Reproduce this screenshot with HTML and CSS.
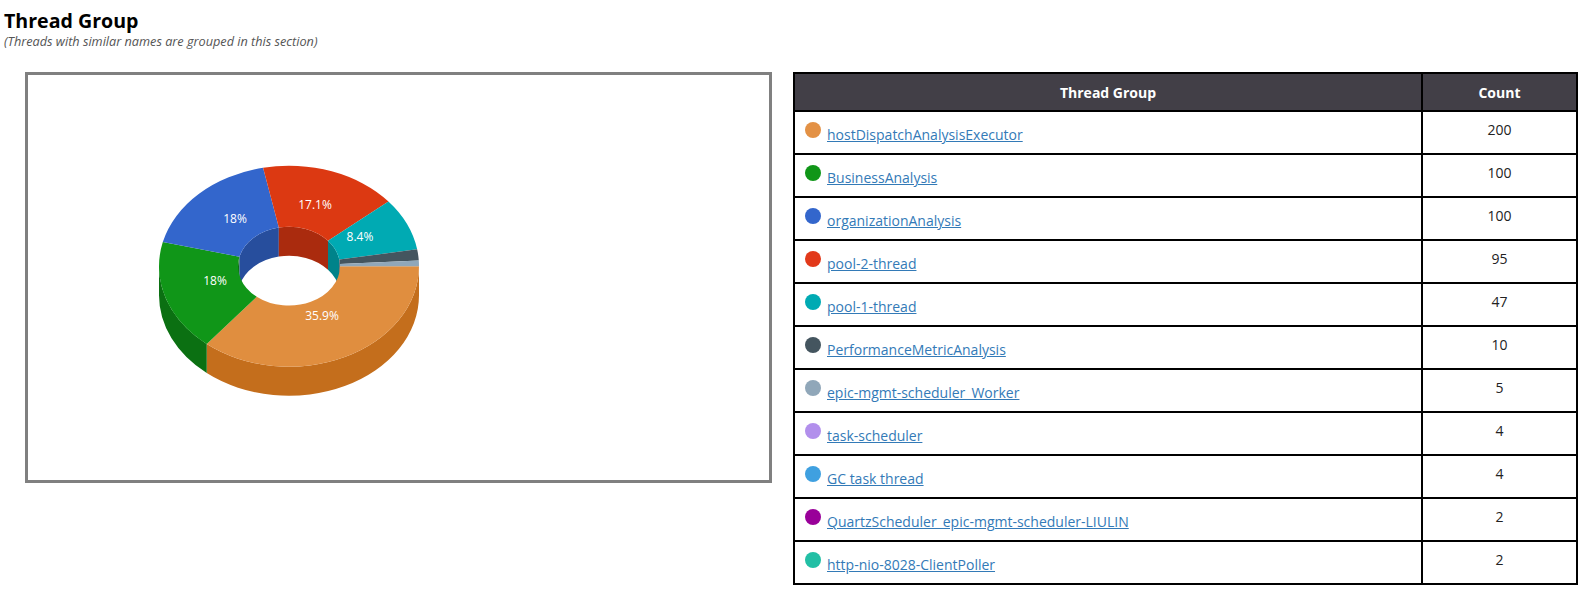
FILE: index.html
```html
<!DOCTYPE html>
<html lang="en">
<head>
<meta charset="utf-8">
<title>Thread Group</title>
<link rel="stylesheet" href="styles.css">
</head>
<body>
<h2 class="title">Thread Group</h2>
<p class="note">(Threads with similar names are grouped in this section)</p>
<div class="content">
  <div class="chart-box">
    <svg class="donut" viewBox="28 75 741 405" width="741" height="405" role="img" aria-label="Thread group pie chart">
      <g transform="translate(0 0.5)">
      <path class="w-orange" d="M419 265.7A130 100.5 0 0 1 206.74 343.52V372.52A130 100.5 0 0 0 419 294.7Z"/>
      <path class="w-green" d="M206.74 343.52A130 100.5 0 0 1 159 265.7V294.7A130 100.5 0 0 0 206.74 372.52Z"/>
      <path class="w-green" d="M238 265.7A51 39.4 0 0 1 239.49 256.24V285.24A51 39.4 0 0 0 238 294.7Z"/>
      <path class="w-blue" d="M239.49 256.24A51 39.4 0 0 1 278.83 227.09V256.09A51 39.4 0 0 0 239.49 285.24Z"/>
      <path class="w-red" d="M278.83 227.09A51 39.4 0 0 1 328.01 240.32V269.32A51 39.4 0 0 0 278.83 256.09Z"/>
      <path class="w-teal" d="M328.01 240.32A51 39.4 0 0 1 339.27 259.06V288.06A51 39.4 0 0 0 328.01 269.32Z"/>
      <path class="w-dark" d="M339.27 259.06A51 39.4 0 0 1 339.92 263.5V292.5A51 39.4 0 0 0 339.27 288.06Z"/>
      <path class="orange" d="M419 265.7A130 100.5 0 0 1 206.74 343.52L256.73 296.21A51 39.4 0 0 0 340 265.7Z"/>
      <path class="green" d="M206.74 343.52A130 100.5 0 0 1 162.81 241.56L239.49 256.24A51 39.4 0 0 0 256.73 296.21Z"/>
      <path class="blue" d="M162.81 241.56A130 100.5 0 0 1 263.08 167.22L278.83 227.09A51 39.4 0 0 0 239.49 256.24Z"/>
      <path class="red" d="M263.08 167.22A130 100.5 0 0 1 388.44 200.97L328.01 240.32A51 39.4 0 0 0 278.83 227.09Z"/>
      <path class="teal" d="M388.44 200.97A130 100.5 0 0 1 417.14 248.77L339.27 259.06A51 39.4 0 0 0 328.01 240.32Z"/>
      <path class="dark" d="M417.14 248.77A130 100.5 0 0 1 418.79 260.09L339.92 263.5A51 39.4 0 0 0 339.27 259.06Z"/>
      <path class="grey" d="M418.79 260.09A130 100.5 0 0 1 419 265.7H340A51 39.4 0 0 0 339.92 263.5Z"/>
      </g>
      <text class="label" x="322" y="320">35.9%</text>
      <text class="label" x="215" y="285">18%</text>
      <text class="label" x="235" y="223">18%</text>
      <text class="label" x="315" y="209">17.1%</text>
      <text class="label" x="360" y="241">8.4%</text>
    </svg>
  </div>
  <table class="groups">
    <thead>
      <tr><th>Thread Group</th><th class="count-col">Count</th></tr>
    </thead>
    <tbody>
      <tr><td><span class="dot c1"></span><a href="#">hostDispatchAnalysisExecutor</a></td><td class="count">200</td></tr>
      <tr><td><span class="dot c2"></span><a href="#">BusinessAnalysis</a></td><td class="count">100</td></tr>
      <tr><td><span class="dot c3"></span><a href="#">organizationAnalysis</a></td><td class="count">100</td></tr>
      <tr><td><span class="dot c4"></span><a href="#">pool-2-thread</a></td><td class="count">95</td></tr>
      <tr><td><span class="dot c5"></span><a href="#">pool-1-thread</a></td><td class="count">47</td></tr>
      <tr><td><span class="dot c6"></span><a href="#">PerformanceMetricAnalysis</a></td><td class="count">10</td></tr>
      <tr><td><span class="dot c7"></span><a href="#">epic-mgmt-scheduler_Worker</a></td><td class="count">5</td></tr>
      <tr><td><span class="dot c8"></span><a href="#">task-scheduler</a></td><td class="count">4</td></tr>
      <tr><td><span class="dot c9"></span><a href="#">GC task thread</a></td><td class="count">4</td></tr>
      <tr><td><span class="dot c10"></span><a href="#">QuartzScheduler_epic-mgmt-scheduler-LIULIN</a></td><td class="count">2</td></tr>
      <tr><td><span class="dot c11"></span><a href="#">http-nio-8028-ClientPoller</a></td><td class="count">2</td></tr>
    </tbody>
  </table>
</div>
</body>
</html>
```
FILE: styles.css
```css
* { box-sizing: border-box; }
body {
  margin: 0;
  padding: 7px 4px 0;
  background: #fff;
  font-family: "Open Sans", sans-serif;
  font-size: 14px;
  color: #222;
}
.title {
  margin: 0;
  font-size: 19.6px;
  line-height: 27px;
  font-weight: 700;
  color: #000;
}
.note {
  margin: 0;
  font-size: 12.7px;
  line-height: 15px;
  font-style: italic;
  color: #555;
}
.content {
  display: flex;
  align-items: flex-start;
  margin-top: 23px;
}
.chart-box {
  width: 747px;
  height: 411px;
  margin-left: 21px;
  margin-right: 21px;
  border: 3px solid #808080;
}
.donut { display: block; }
.label {
  fill: #fff;
  font-size: 12px;
  text-anchor: middle;
}
.orange { fill: #e08e3f; }
.green { fill: #109618; }
.blue { fill: #3366cc; }
.red { fill: #dc3912; }
.teal { fill: #00aab3; }
.dark { fill: #44555f; }
.grey { fill: #90a7b9; }
.w-orange { fill: #c46e1c; }
.w-green { fill: #0b7012; }
.w-blue { fill: #274e9d; }
.w-red { fill: #aa2b0e; }
.w-teal { fill: #00838a; }
.w-dark { fill: #35454d; }
.groups {
  width: 785px;
  border-collapse: collapse;
  border: 2px solid #000;
  table-layout: fixed;
}
.groups th, .groups td {
  border: 2px solid #000;
}
.groups th {
  height: 38px;
  background: #423f47;
  color: #fff;
  font-weight: 700;
  text-align: center;
  padding: 0;
}
.groups .count-col { width: 155px; }
.groups td {
  height: 43px;
  padding: 0 10px;
  vertical-align: top;
}
.groups a {
  color: #337ab7;
  text-decoration: underline;
  line-height: 19px;
  display: inline-block;
  padding-top: 13px;
}
.dot {
  display: inline-block;
  width: 16px;
  height: 16px;
  border-radius: 50%;
  margin-right: 6px;
  vertical-align: top;
  margin-top: 10px;
}
.count {
  text-align: center;
  line-height: 19px;
}
.groups td.count { padding-top: 8px; }
.c1 { background: #e39145; }
.c2 { background: #109618; }
.c3 { background: #3366cc; }
.c4 { background: #e2391a; }
.c5 { background: #00aab3; }
.c6 { background: #44555f; }
.c7 { background: #90a7b9; }
.c8 { background: #b28fec; }
.c9 { background: #3fa0e0; }
.c10 { background: #990099; }
.c11 { background: #22bfa5; }
```
